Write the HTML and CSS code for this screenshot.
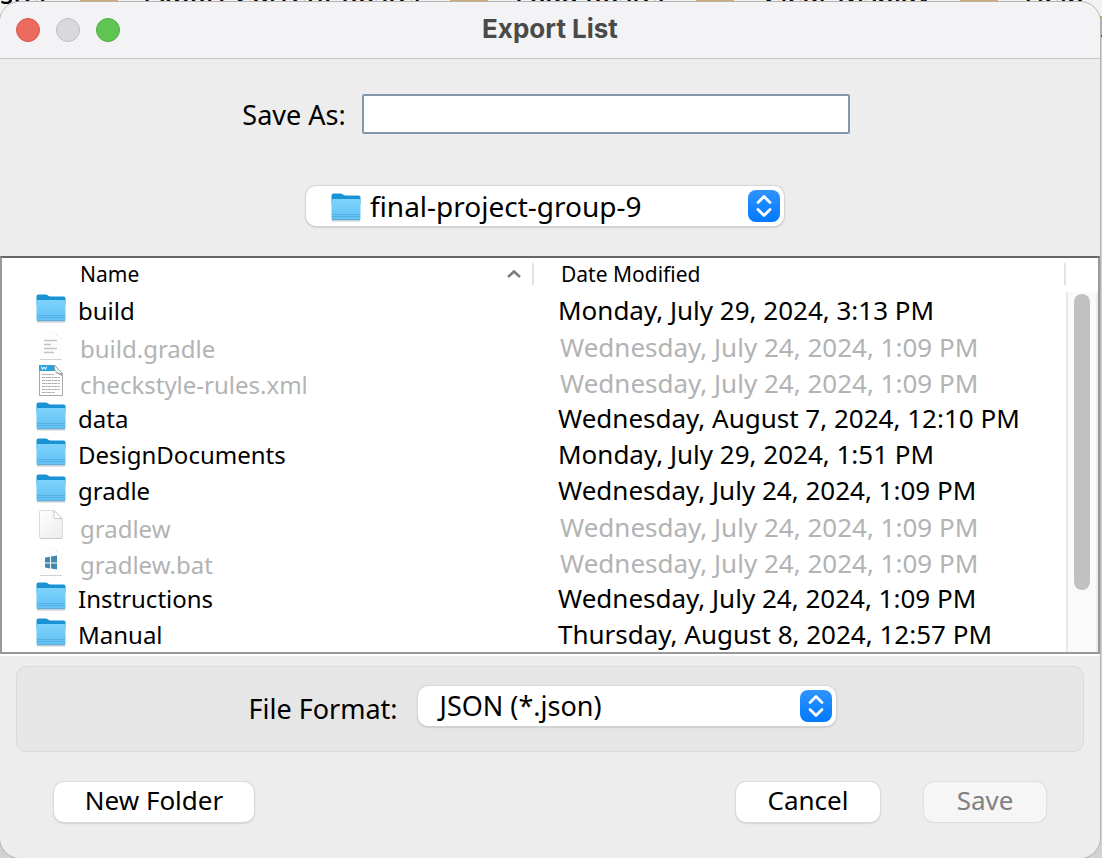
FILE: index.html
```html
<!DOCTYPE html>
<html lang="en">
<head>
<meta charset="utf-8">
<title>Export List</title>
<link rel="stylesheet" href="styles.css">
</head>
<body>
<svg class="defs" aria-hidden="true">
  <defs>
    <linearGradient id="folder-front" x1="0" y1="0" x2="0" y2="1">
      <stop offset="0" stop-color="#7dd3fb"/><stop offset="1" stop-color="#62c0f5"/>
    </linearGradient>
    <linearGradient id="page-fill" x1="0" y1="0" x2="1" y2="1">
      <stop offset="0" stop-color="#fefefe"/><stop offset="1" stop-color="#ececec"/>
    </linearGradient>
    <symbol id="folder" viewBox="0 0 32 32">
      <path d="M2 28.500h28" stroke="#8d9aa2" stroke-opacity=".5" stroke-width="2"/>
      <path d="M1.500 3.500Q1.500 1.500 3.500 1.500H10.500Q12 1.500 13 2.500Q14 3.500 15.500 3.500H28.500Q30.500 3.500 30.500 5V12H1.500Z" fill="#1a93d6"/>
      <path d="M1.500 8.500Q1.500 7 3 7H29Q30.500 7 30.500 8.500V26.500Q30.500 28 29 28H3Q1.500 28 1.500 26.500Z" fill="url(#folder-front)"/>
      <path d="M2 22.500H30M2 24.500H30" stroke="#4ba9dd" stroke-width=".7"/>
      <path d="M2 27.500H30" stroke="#58aedd"/>
    </symbol>
    <symbol id="text-file" viewBox="0 0 32 32">
      <path d="M5 1H17L27 10V30H5Z" fill="#fdfdfd"/>
      <path d="M16 1Q19 1 20 4Q21 7 24 7.500Q27 8 27 10L17 1Z" fill="#e2e2e2"/>
      <path d="M5 30.500H27" stroke="#d2d2d2"/>
      <path d="M9 11.500H22M9 15.500H16M9 19.500H22M9 23.500H19" stroke="#c3c3c3" stroke-width="1.500"/>
    </symbol>
    <symbol id="xml-file" viewBox="0 0 32 32">
      <path d="M4.500 .5H20L27.500 8.500V30.500H4.500Z" fill="#fff" stroke="#a8a8a8"/>
      <path d="M4 0H20V6H4Z" fill="#2aa4d8"/>
      <path d="M6.500 1.500L7.500 4.500L9 2L10.500 4.500L11.500 1.500" fill="none" stroke="#fff"/>
      <path d="M19.500 .5V4L22 8.500H27.500Z" fill="#f3f3f3" stroke="#a0a0a0" stroke-width=".8"/>
      <path d="M20 7L27 9V11Z" fill="#999"/>
      <path d="M7 9.500H19M7 12.500H25M7 15.500H25M7 18.500H25M7 21.500H25M7 24.500H25M7 27.500H20" stroke="#aaa" stroke-dasharray="3 .6 2 .5"/>
    </symbol>
    <symbol id="blank-file" viewBox="0 0 32 32">
      <path d="M6 1.500H19L27.500 10V28Q27.500 29.500 26 29.500H6Q4.500 29.500 4.500 28V3Q4.500 1.500 6 1.500Z" fill="url(#page-fill)" stroke="#dedede"/>
      <path d="M5 29.500H27" stroke="#c9c9c9"/>
      <path d="M19 1.500V8.500Q19 9.500 20 9.500H27Z" fill="#fff" stroke="#c9c9c9"/>
    </symbol>
    <symbol id="bat-file" viewBox="0 0 32 32">
      <path d="M5 1H17L27 10V30H5Z" fill="#fdfdfd"/>
      <path d="M16 1Q19 1 20 4Q21 7 24 7.500Q27 8 27 10L17 1Z" fill="#e2e2e2"/>
      <path d="M5 30.500H27" stroke="#d2d2d2"/>
      <path d="M10 12.500L15 11.700V17.500H10ZM16 11.500L22 10.500V17.500H16ZM10 18.500H15V23.500L10 22.500ZM16 18.500H22V24.500L16 23.500Z" fill="#4189ad"/>
    </symbol>
    <linearGradient id="stepper-fill" x1="0" y1="0" x2="0" y2="1">
      <stop offset="0" stop-color="#2f94ff"/><stop offset="1" stop-color="#0079ff"/>
    </linearGradient>
    <symbol id="stepper" viewBox="0 0 32 32">
      <rect width="32" height="32" rx="8" fill="url(#stepper-fill)"/>
      <path d="M10 12.500L16 6.500L22 12.500M10 19.500L16 25.500L22 19.500" fill="none" stroke="#fff" stroke-width="2.800" stroke-linecap="round" stroke-linejoin="round"/>
    </symbol>
  </defs>
</svg>

<div class="desktop">
  <div class="toolbar" aria-hidden="true">
    <span>ster</span><i></i><span>Export Current Roster</span><i></i><span>Load Roster</span><i></i><span>Clear Display</span><i></i><span>Help</span>
  </div>

  <form class="dialog">
    <header class="titlebar">
      <div class="lights">
        <button type="button" class="light close" aria-label="Close"></button>
        <button type="button" class="light minimize" aria-label="Minimize" disabled></button>
        <button type="button" class="light zoom" aria-label="Zoom"></button>
      </div>
      <h1>Export List</h1>
    </header>

    <section class="destination">
      <div class="save-as">
        <label for="filename">Save As:</label>
        <input id="filename" type="text">
      </div>
      <div class="picker location">
        <svg class="picker-folder" aria-hidden="true"><use href="#folder"/></svg>
        <select aria-label="Folder"><option>final-project-group-9</option></select>
        <svg class="stepper" aria-hidden="true"><use href="#stepper"/></svg>
      </div>
    </section>

    <section class="browser">
      <table class="files">
        <thead>
          <tr>
            <th><div class="head"><span>Name</span><svg class="sort" viewBox="0 0 16 10" aria-hidden="true"><path d="M2 8L8 2.500L14 8"/></svg></div></th>
            <th><div class="head">Date Modified</div></th>
          </tr>
        </thead>
        <tbody>
          <tr><td><div class="file"><svg><use href="#folder"/></svg><span>build</span></div></td><td>Monday, July 29, 2024, 3:13 PM</td></tr>
          <tr class="off"><td><div class="file"><svg><use href="#text-file"/></svg><span>build.gradle</span></div></td><td>Wednesday, July 24, 2024, 1:09 PM</td></tr>
          <tr class="off"><td><div class="file"><svg><use href="#xml-file"/></svg><span>checkstyle-rules.xml</span></div></td><td>Wednesday, July 24, 2024, 1:09 PM</td></tr>
          <tr><td><div class="file"><svg><use href="#folder"/></svg><span>data</span></div></td><td>Wednesday, August 7, 2024, 12:10 PM</td></tr>
          <tr><td><div class="file"><svg><use href="#folder"/></svg><span>DesignDocuments</span></div></td><td>Monday, July 29, 2024, 1:51 PM</td></tr>
          <tr><td><div class="file"><svg><use href="#folder"/></svg><span>gradle</span></div></td><td>Wednesday, July 24, 2024, 1:09 PM</td></tr>
          <tr class="off"><td><div class="file"><svg><use href="#blank-file"/></svg><span>gradlew</span></div></td><td>Wednesday, July 24, 2024, 1:09 PM</td></tr>
          <tr class="off"><td><div class="file"><svg><use href="#bat-file"/></svg><span>gradlew.bat</span></div></td><td>Wednesday, July 24, 2024, 1:09 PM</td></tr>
          <tr><td><div class="file"><svg><use href="#folder"/></svg><span>Instructions</span></div></td><td>Wednesday, July 24, 2024, 1:09 PM</td></tr>
          <tr><td><div class="file"><svg><use href="#folder"/></svg><span>Manual</span></div></td><td>Thursday, August 8, 2024, 12:57 PM</td></tr>
        </tbody>
      </table>
      <div class="scrollbar"><div class="thumb"></div></div>
    </section>

    <section class="options">
      <label for="format">File Format:</label>
      <div class="picker format">
        <select id="format"><option>JSON (*.json)</option></select>
        <svg class="stepper" aria-hidden="true"><use href="#stepper"/></svg>
      </div>
    </section>

    <footer class="actions">
      <button type="button" class="button new-folder">New Folder</button>
      <button type="button" class="button cancel">Cancel</button>
      <button type="submit" class="button save" disabled>Save</button>
    </footer>
  </form>
</div>
</body>
</html>
```

FILE: styles.css
```css
* { box-sizing: border-box; }

body {
  margin: 0;
  background: #d2d2d2;
  color: #000;
  font-family: "Noto Sans", "Open Sans", sans-serif;
  font-size: 27px;
}

button, input, select { font: inherit; color: inherit; margin: 0; }

.defs { position: absolute; width: 0; height: 0; }

/* The dialog is stacked over the window behind it */
.desktop {
  display: grid;
  min-height: 100vh;
  overflow: hidden;
}
.toolbar, .dialog { grid-area: 1 / 1; }

.toolbar {
  display: flex;
  height: 37px;
  background: linear-gradient(#f2f2f2 16px, #d0aa68 16px, #d0aa68 35px, #555 35px);
  font-size: 27px;
  font-weight: 500;
  line-height: 36px;
  white-space: nowrap;
}
.toolbar span {
  height: 16px;
  margin-top: -24px;
  text-align: center;
}
.toolbar span:nth-of-type(1) { width: 80px; text-align: left; }
.toolbar span:nth-of-type(2) { width: 332px; }
.toolbar span:nth-of-type(3) { width: 208px; }
.toolbar span:nth-of-type(4) { width: 226px; }
.toolbar span:nth-of-type(5) { width: 104px; padding-left: 8px; }
.toolbar i { width: 38px; height: 16px; background: #d0aa68; }

.dialog {
  display: flex;
  flex-direction: column;
  min-width: 0;
  margin: 2px 2px 0 0;
  overflow: hidden;
  background: #ededed;
  border-radius: 20px;
  box-shadow: 0 0 0 1px #b4b4b4;
}

.titlebar {
  display: grid;
  grid-template-columns: 1fr auto 1fr;
  align-items: center;
  height: 57px;
  padding: 0 16px;
  background: #f3f3f5;
  border-bottom: 1px solid #c6c6c8;
}
.lights { display: flex; gap: 16px; }
.light {
  width: 24px;
  height: 24px;
  padding: 0;
  border: 1px solid;
  border-radius: 50%;
}
.close { background: #ed6a5e; border-color: #d9564c; }
.minimize { background: #d9d9db; border-color: #bebec0; }
.zoom { background: #61c554; border-color: #4fad40; }
.titlebar h1 {
  margin: 0;
  padding-bottom: 2px;
  color: #4a4a4a;
  font: 700 26px/32px Inter, Roboto, sans-serif;
}

.destination {
  display: flex;
  flex-direction: column;
  align-items: center;
  gap: 52px;
  padding: 35px 10px 30px 0;
}
.save-as { display: flex; align-items: center; gap: 16px; padding-left: 2px; }
.save-as input {
  width: 488px;
  height: 40px;
  padding: 0 8px;
  background: #fff;
  border: 2px solid #8496ae;
  border-radius: 2px;
}

.picker { position: relative; }
.picker select {
  width: 100%;
  height: 40px;
  padding: 0 44px 0 16px;
  appearance: none;
  background: #fff;
  border: 0;
  border-radius: 10px;
  box-shadow: 0 0 1px 1px #d6d6d6, 0 1px 2px #999;
  line-height: 36px;
  text-indent: 6px;
}
.location { width: 478px; height: 40px; font-size: 28px; }
.location select { padding-left: 58px; }
.format { width: 418px; height: 40px; }
.stepper, .picker-folder {
  position: absolute;
  top: 4px;
  width: 32px;
  height: 32px;
  pointer-events: none;
}
.stepper { right: 4px; }
.picker-folder { left: 24px; top: 6px; }

.browser {
  display: flex;
  background: #fff;
  border: 2px solid #999;
  border-top-color: #666;
  box-shadow: 0 2px #fff;
}
.files {
  flex: 1;
  width: 100%;
  min-width: 0;
  border-collapse: collapse;
  table-layout: fixed;
}
.files th, .files td { padding: 0; text-align: left; font-weight: 400; white-space: nowrap; }
.files th { height: 34px; font-size: 21px; line-height: 22px; padding-bottom: 2px; }
.head {
  display: flex;
  align-items: center;
  justify-content: space-between;
  height: 22px;
  padding: 0 10px 0 27px;
  border-right: 2px solid #e2e2e2;
}
th:first-child { width: 50%; }
th:first-child .head { padding-left: 78px; }
.sort { width: 16px; height: 10px; fill: none; stroke: #7d7d7d; stroke-width: 2.5; }

.files td { height: 36px; font-size: 26px; line-height: 36px; }
.files td + td { padding-left: 24px; }
.file { display: flex; gap: 11px; height: 36px; padding: 1px 0 0 33px; font-size: 24px; }
.file svg { width: 32px; height: 32px; flex: none; }
.off { color: #b3b3b3; }
.off .file { gap: 13px; }
.off .file span { padding-top: 2px; line-height: 36px; }
.off td + td { padding-top: 2px; padding-left: 26px; line-height: 34px; }

.scrollbar {
  flex: none;
  width: 32px;
  margin-top: 34px;
  padding: 2px 6px 0;
  background: #fafafa;
  border-left: 2px solid #e8e8e8;
  border-right: 2px solid #eee;
}
.thumb { width: 16px; height: 296px; background: #c1c1c1; border-radius: 8px; }

.options {
  display: flex;
  justify-content: center;
  align-items: center;
  gap: 20px;
  height: 86px;
  margin: 12px 16px 0;
  padding: 0 16px 6px 0;
  background: #e6e6e6;
  border: 1px solid #dadada;
  border-radius: 10px;
}
.options label { padding-top: 4px; }

.actions {
  display: flex;
  flex: 1;
  padding: 30px 54px 36px;
}
.button {
  height: 40px;
  padding: 0 0 4px;
  background: #fff;
  border: 0;
  border-radius: 10px;
  box-shadow: 0 0 1px 1px #dcdcdc, 0 1px 2px #999;
  font-size: 26px;
  line-height: 36px;
}
.new-folder { width: 200px; margin-right: auto; }
.cancel { width: 144px; margin-right: 44px; }
.save { width: 122px; }
.save:disabled { background: #f6f6f6; color: #808080; box-shadow: 0 0 1px 1px #e0e0e0, 0 1px 1px #ccc; }
```
